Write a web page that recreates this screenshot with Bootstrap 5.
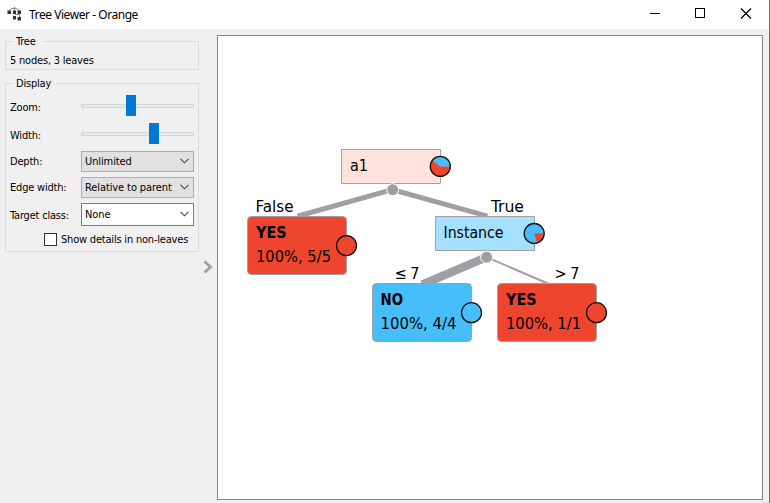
<!DOCTYPE html>
<html lang="en">
<head>
<meta charset="utf-8">
<title>Tree Viewer - Orange</title>
<link href="https://cdn.jsdelivr.net/npm/bootstrap@5.3.0/dist/css/bootstrap.min.css" rel="stylesheet">
<style>
body{font-family:"DejaVu Sans Condensed","DejaVu Sans",sans-serif;font-stretch:condensed;font-size:11px;line-height:14px;color:#000;background:#f0f0f0;letter-spacing:-.2px}
.window{width:770px;height:503px;border-right:1px solid #6e6e6e}
.titlebar{height:29px;background:#fff;padding-left:7px}
.title-text{font-family:"Noto Sans",sans-serif;font-size:12px;letter-spacing:-.45px;margin-left:7px}
.side{width:217px;padding:5px 0 0 5px}
.group{width:194px;border:1px solid #dcdcdc;padding:0 4px}
.group legend{float:none;width:auto;height:14px;font-size:11px;line-height:14px;margin:0 0 0 3px;padding:1px 6px 0 3px;background:#f0f0f0}
.group-tree{height:36px;margin-bottom:6px}
.group-display{height:176px;padding-top:4px}
.group-tree p{margin:6px 0 0}
.line{height:28px}
.line-sel{height:26px}
.line-first{margin-top:-2px}
.line>label{width:71px;white-space:nowrap}
.line-sel>label{padding-top:2px}
.form-range.slim{width:113px;height:21px;margin-bottom:4px}
.slim::-webkit-slider-runnable-track{height:4px;background:#e7eaea;border:1px solid #d6d6d6;border-radius:0}
.slim::-webkit-slider-thumb{width:10px;height:21px;margin-top:-10px;background:#0078d7;border-radius:0}
.form-select.combo{width:113px;height:21px;padding:2px 18px 0 3px;font-size:11px;line-height:14px;letter-spacing:-.1px;color:#000;border:1px solid #adadad;border-radius:0;background-color:#e1e1e1;background-position:right 4px center;background-size:9px 6px;background-image:url("data:image/svg+xml,%3Csvg xmlns='http://www.w3.org/2000/svg' viewBox='0 0 9 6'%3E%3Cpath d='M.5.8 4.5 4.8 8.5.8' fill='none' stroke='%23444' stroke-width='1.1'/%3E%3C/svg%3E")}
.form-select.combo-white{height:23px;background-color:#fff;border-color:#7a7a7a}
.form-check-input.box{width:13px;height:13px;margin:0 4px 0 0;border:1px solid #333;border-radius:0}
.check-line{height:15px;margin:4px 0 0 34px}
.expander{width:10px;margin:226px 0 0 4px}
.canvas{width:546px;height:465px;margin-top:6px;border:1px solid #828790;background:#fff}
.tree{font-size:16px;letter-spacing:0}
.tree .strong{font-weight:bold}
</style>
</head>
<body>
<div class="window d-flex flex-column overflow-hidden">
  <header class="titlebar d-flex align-items-center flex-shrink-0">
    <svg width="15" height="15" viewBox="0 0 15 15"><path d="M2.500 4V3.500Q3 1.500 7 1.200 12 1.500 12.500 4M7.500 0v4M8 7.500h4.500V11" fill="none" stroke="#888"/><path d="M.5 3.500h3.500v3.500H.5zM6 3.500h3V7H6zM10.500 3.500H14V7h-3.500zM6 9h3v3.500H6zM10.500 10H14v3.500h-3.500z" fill="#333"/></svg>
    <span class="title-text">Tree Viewer - Orange</span>
    <svg class="ms-auto" width="130" height="29" viewBox="639 0 130 29" fill="none" stroke="#000" shape-rendering="crispEdges"><path d="M650 13.500h10M695.500 8.500h9v9h-9z"/><path d="M741 8.500l10 10M751 8.500l-10 10" shape-rendering="auto" stroke-width="1.200"/></svg>
  </header>
  <main class="d-flex flex-grow-1">
    <aside class="side d-flex flex-shrink-0">
      <div>
        <fieldset class="group group-tree"><legend>Tree</legend><p>5 nodes, 3 leaves</p></fieldset>
        <fieldset class="group group-display"><legend>Display</legend>
          <div class="line d-flex align-items-center"><label for="zoom">Zoom:</label><input id="zoom" class="form-range slim" type="range" min="0" max="103" value="45"></div>
          <div class="line d-flex align-items-center"><label for="width">Width:</label><input id="width" class="form-range slim" type="range" min="0" max="103" value="68"></div>
          <div class="line line-sel line-first d-flex align-items-center"><label for="depth">Depth:</label><select id="depth" class="form-select combo"><option>Unlimited</option></select></div>
          <div class="line line-sel d-flex align-items-center"><label for="edge">Edge width:</label><select id="edge" class="form-select combo"><option>Relative to parent</option></select></div>
          <div class="line d-flex align-items-center"><label for="target" class="pt-1">Target class:</label><select id="target" class="form-select combo combo-white"><option>None</option></select></div>
          <div class="check-line d-flex align-items-center"><input id="details" class="form-check-input box" type="checkbox"><label for="details" class="text-nowrap">Show details in non-leaves</label></div>
        </fieldset>
      </div>
      <svg class="expander flex-shrink-0" height="14" viewBox="0 0 10 14" fill="none" stroke="#a0a0a0" stroke-width="2.800"><path d="M1.500 1.500 7.500 7l-6 5.500"/></svg>
    </aside>
    <section class="canvas flex-shrink-0">
      <svg class="tree d-block" width="544" height="463" viewBox="218 36 544 463">
        <g stroke="#a0a0a4" fill="none">
          <path d="M392.700 189.700 300 215.500M392.700 189.700 485 215.500" stroke-width="5" stroke-linecap="square"/>
          <path d="M486.600 257.200 426 283" stroke-width="8.500" stroke-linecap="square"/>
          <path d="M486.600 257.200 549 284" stroke-width="2"/>
        </g>
        <g stroke="#a0a0a4">
          <path d="M341.500 149.500h99v34h-99z" fill="#ffe1dd"/>
          <path d="M435.500 216.500h99v34h-99z" fill="#a5e0ff"/>
          <rect x="247.500" y="216.500" width="99" height="58" rx="4" fill="#ee452f"/>
          <rect x="372.500" y="283.500" width="99" height="58" rx="4" fill="#46befa"/>
          <rect x="497.500" y="283.500" width="99" height="58" rx="4" fill="#ee452f"/>
        </g>
        <g fill="#a0a0a4" stroke="#fff"><circle cx="392.700" cy="189.700" r="6"/><circle cx="486.600" cy="257.200" r="6"/></g>
        <g fill="#ee452f"><circle cx="440.300" cy="166.400" r="10"/><circle cx="346.500" cy="245.600" r="10"/><circle cx="596.500" cy="312.700" r="10"/></g>
        <g fill="#46befa"><circle cx="534.200" cy="233.500" r="10"/><circle cx="471.500" cy="312.700" r="10"/><path d="M440.300 166.400h10a10 10 0 0 0-18.100-5.900z"/></g>
        <path d="M534.200 233.500h10a10 10 0 0 1-6.900 9.500z" fill="#ee452f"/>
        <g fill="none" stroke="#111" stroke-width="1.300"><circle cx="440.300" cy="166.400" r="10"/><circle cx="346.500" cy="245.600" r="10"/><circle cx="596.500" cy="312.700" r="10"/><circle cx="534.200" cy="233.500" r="10"/><circle cx="471.500" cy="312.700" r="10"/></g>
        <text x="350" y="171" textLength="18" lengthAdjust="spacingAndGlyphs">a1</text>
        <text x="443.500" y="238" textLength="60" lengthAdjust="spacingAndGlyphs">Instance</text>
        <text x="255.500" y="212" textLength="38" lengthAdjust="spacingAndGlyphs">False</text>
        <text x="491" y="212" textLength="33" lengthAdjust="spacingAndGlyphs">True</text>
        <text x="394.500" y="279" textLength="25" lengthAdjust="spacing">≤ 7</text>
        <text x="554.500" y="279" textLength="25" lengthAdjust="spacing">&gt; 7</text>
        <text class="strong" x="256" y="238" textLength="30.500" lengthAdjust="spacingAndGlyphs">YES</text>
        <text x="256" y="262" textLength="75" lengthAdjust="spacingAndGlyphs">100%, 5/5</text>
        <text class="strong" x="380.500" y="305" textLength="22.500" lengthAdjust="spacingAndGlyphs">NO</text>
        <text x="380.500" y="329" textLength="76" lengthAdjust="spacingAndGlyphs">100%, 4/4</text>
        <text class="strong" x="506" y="305" textLength="30.500" lengthAdjust="spacingAndGlyphs">YES</text>
        <text x="506" y="329" textLength="75" lengthAdjust="spacingAndGlyphs">100%, 1/1</text>
      </svg>
    </section>
  </main>
</div>
<script src="https://cdn.jsdelivr.net/npm/bootstrap@5.3.0/dist/js/bootstrap.bundle.min.js"></script>
</body>
</html>
